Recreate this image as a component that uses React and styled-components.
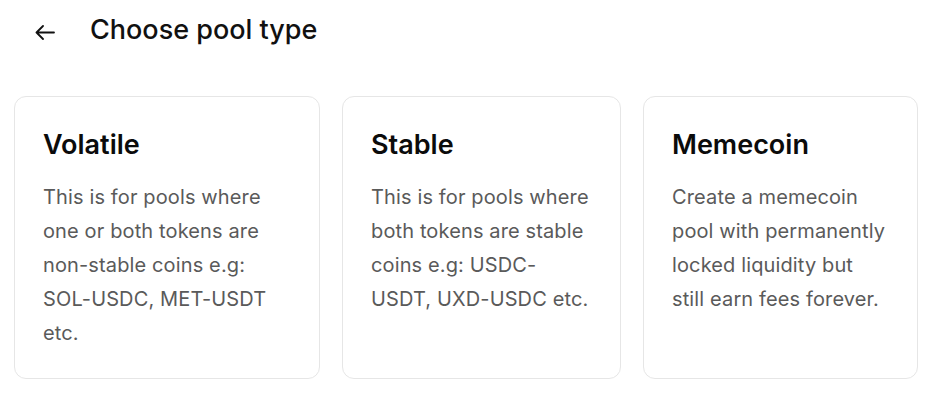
import React from 'react';
import styled, { createGlobalStyle } from 'styled-components';

const GlobalStyle = createGlobalStyle`
  body {
    margin: 0;
    background: #ffffff;
    font-family: Inter, "Noto Sans", sans-serif;
    color: #111111;
  }
`;

const Page = styled.div`
  padding: 13px 14px 0 14px;
`;

const Header = styled.div`
  display: flex;
  align-items: center;
  gap: 35px;
  height: 34px;
  padding-left: 21px;
`;

const BackButton = styled.button`
  display: flex;
  align-items: center;
  padding: 0;
  margin-top: 5px;
  border: none;
  background: none;
  color: #111111;
  cursor: pointer;
`;

const Title = styled.h1`
  margin: 0;
  font-size: 27px;
  line-height: 34px;
  font-weight: 500;
`;

const CardRow = styled.div`
  display: flex;
  gap: 22px;
  margin-top: 49px;
`;

const Card = styled.div`
  box-sizing: border-box;
  width: ${(p) => p.$width}px;
  height: 283px;
  padding: 31px 30px 30px 28px;
  border: 1px solid #e6e6e6;
  border-radius: 12px;
  background: #fff;
  cursor: pointer;
`;

const CardTitle = styled.h2`
  margin: 0 0 18px 0;
  font-size: 27px;
  line-height: 34px;
  font-weight: 600;
  color: #0b0b0b;
`;

const CardText = styled.p`
  margin: 0;
  font-size: 20px;
  line-height: 34px;
  letter-spacing: 0.13px;
  color: #5a5a5a;
`;

const ArrowLeft = () => (
  <svg width="20" height="15" viewBox="0 0 20 15" fill="none">
    <path
      d="M19 7.5H1.5M8 1L1.5 7.5L8 14"
      stroke="currentColor"
      strokeWidth="1.8"
      strokeLinecap="round"
      strokeLinejoin="round"
    />
  </svg>
);

const poolTypes = [
  {
    title: 'Volatile',
    text: 'This is for pools where one or both tokens are non-stable coins e.g: SOL-USDC, MET-USDT etc.',
    width: 306,
  },
  {
    title: 'Stable',
    text: 'This is for pools where both tokens are stable coins e.g: USDC-USDT, UXD-USDC etc.',
    width: 279,
  },
  {
    title: 'Memecoin',
    text: 'Create a memecoin pool with permanently locked liquidity but still earn fees forever.',
    width: 275,
  },
];

const App = () => {
  return (
    <>
      <GlobalStyle />
      <Page>
        <Header>
          <BackButton aria-label="Back">
            <ArrowLeft />
          </BackButton>
          <Title>Choose pool type</Title>
        </Header>
        <CardRow>
          {poolTypes.map((pool) => (
            <Card key={pool.title} $width={pool.width}>
              <CardTitle>{pool.title}</CardTitle>
              <CardText>{pool.text}</CardText>
            </Card>
          ))}
        </CardRow>
      </Page>
    </>
  );
};

export default App;
